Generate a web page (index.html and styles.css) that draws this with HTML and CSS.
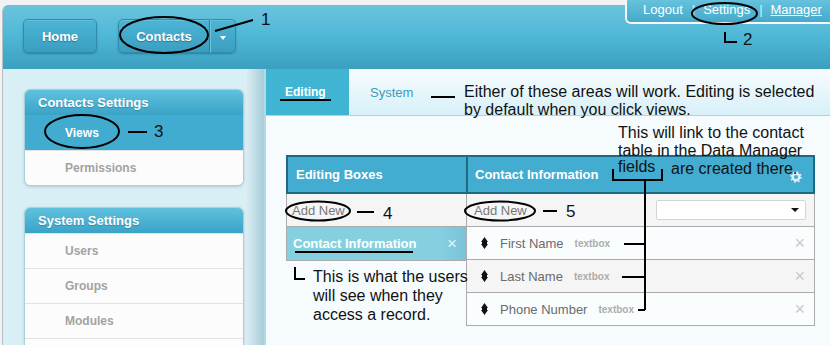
FILE: index.html
```html
<!DOCTYPE html>
<html lang="en">
<head>
    <meta charset="UTF-8">
    <title>Contacts - Views</title>
    <link rel="stylesheet" href="styles.css">
</head>
<body>

    <div class="util">
        <a class="util-link">Logout</a>
        <span class="util-sep">|</span>
        <a class="util-link">Settings</a>
        <span class="util-sep">|</span>
        <a class="util-link current">Manager</a>
    </div>

    <div class="app">
        <header class="topbar">
            <a class="btn btn-home">Home</a>
            <div class="btn-group">
                <a class="btn btn-main">Contacts</a>
                <span class="btn btn-caret"></span>
            </div>
        </header>

        <div class="layout">
            <aside class="sidebar">
                <div class="menu-box">
                    <div class="menu-title">Contacts Settings</div>
                    <a class="menu-item active">Views</a>
                    <a class="menu-item">Permissions</a>
                </div>
                <div class="menu-box">
                    <div class="menu-title">System Settings</div>
                    <a class="menu-item">Users</a>
                    <a class="menu-item">Groups</a>
                    <a class="menu-item">Modules</a>
                    <a class="menu-item"></a>
                </div>
            </aside>

            <main class="content">
                <nav class="tabs">
                    <a class="tab active">Editing</a>
                    <a class="tab">System</a>
                </nav>

                <div class="panel">
                    <div class="boxes">
                        <div class="cell-head">Editing Boxes</div>
                        <div class="row row-add"><a class="add-new">Add New</a></div>
                        <div class="row row-box">
                            <span>Contact Information</span>
                            <span class="remove">&times;</span>
                        </div>
                    </div>

                    <div class="fields">
                        <div class="cell-head">
                            Contact Information
                            <!-- gear -->
                            <svg class="gear" width="12" height="12" viewBox="0 0 12 12">
                                <circle cx="6" cy="6" r="3.3" fill="none" stroke="#dcf0f6" stroke-width="2.4"/>
                                <circle cx="6" cy="6" r="4.9" fill="none" stroke="#dcf0f6" stroke-width="1.8" stroke-dasharray="1.7 2.15"/>
                            </svg>
                        </div>
                        <div class="row row-add">
                            <a class="add-new">Add New</a>
                            <div class="field-select"><span class="select-caret"></span></div>
                        </div>
                        <div class="row row-field">
                            <svg class="drag" width="7" height="12" viewBox="0 0 7 12"><path d="M0 5L3.5 0L7 5ZM0 7L3.5 12L7 7Z" fill="#111"/><rect x="1" y="5" width="5" height="2" fill="#111"/></svg>
                            <span class="field-name">First Name</span>
                            <span class="field-type">textbox</span>
                            <span class="remove">&times;</span>
                        </div>
                        <div class="row row-field alt">
                            <svg class="drag" width="7" height="12" viewBox="0 0 7 12"><path d="M0 5L3.5 0L7 5ZM0 7L3.5 12L7 7Z" fill="#111"/><rect x="1" y="5" width="5" height="2" fill="#111"/></svg>
                            <span class="field-name">Last Name</span>
                            <span class="field-type">textbox</span>
                            <span class="remove">&times;</span>
                        </div>
                        <div class="row row-field">
                            <svg class="drag" width="7" height="12" viewBox="0 0 7 12"><path d="M0 5L3.5 0L7 5ZM0 7L3.5 12L7 7Z" fill="#111"/><rect x="1" y="5" width="5" height="2" fill="#111"/></svg>
                            <span class="field-name">Phone Number</span>
                            <span class="field-type">textbox</span>
                            <span class="remove">&times;</span>
                        </div>
                    </div>
                </div>
            </main>
        </div>
    </div>

    <!-- hand drawn notes on top of the screenshot -->
    <div class="notes">
        <svg class="marks" width="830" height="345" viewBox="0 0 830 345">
            <g fill="none" stroke="#000" stroke-width="2">
                <ellipse cx="164" cy="35" rx="44" ry="18"/>
                <path d="M215 31L253 20"/>
                <ellipse cx="724.5" cy="13.5" rx="32.5" ry="10.5"/>
                <path d="M725 32V42H737"/>
                <ellipse cx="82" cy="131.5" rx="37" ry="16.5"/>
                <path d="M128 132H147"/>
                <path d="M431 97H455"/>
                <path d="M280 100H331"/>
                <ellipse cx="318" cy="211" rx="32" ry="9.5"/>
                <path d="M357 212H374"/>
                <ellipse cx="500" cy="211" rx="35" ry="9.5"/>
                <path d="M543 211H557"/>
                <path d="M295 252H413"/>
                <path d="M613 169V180H662V169"/>
                <path d="M645 180V310"/>
                <path d="M624 244H645M622 277H645M638 310H645"/>
                <path d="M295 267V279H305"/>
            </g>
        </svg>
        <div class="note num n1">1</div>
        <div class="note num n2">2</div>
        <div class="note num n3">3</div>
        <div class="note num n4">4</div>
        <div class="note num n5">5</div>
        <div class="note note-tab">Either of these areas will work. Editing is selected<br>by default when you click views.</div>
        <div class="note note-link">This will link to the contact<br>table in the Data Manager</div>
        <div class="note note-fields">fields</div>
        <div class="note note-there">are created there.</div>
        <div class="note note-record">This is what the users<br>will see when they<br>access a record.</div>
    </div>

</body>
</html>
```

FILE: styles.css
```css
/* page shell */
body {
    margin: 0;
    height: 345px;
    overflow: hidden;
    position: relative;
    background: #f2f2f2;
    font-family: 'Liberation Sans', Arial, sans-serif;
}

a {
    cursor: pointer;
}

.app {
    margin: 5px 0 0 2px;
    border-left: 1px solid #b9bfc2;
    border-top-left-radius: 6px;
    overflow: hidden;
    height: 340px;
}

/* top bar */
.topbar {
    height: 64px;
    box-sizing: border-box;
    padding: 14px 0 0 20px;
    display: flex;
    align-items: flex-start;
    gap: 21px;
    background: linear-gradient(#6cc3dc, #50b9d8 45%, #3b9fc0);
}

.btn {
    height: 34px;
    box-sizing: border-box;
    display: flex;
    align-items: center;
    justify-content: center;
    border: 1px solid #2f8cac;
    border-radius: 5px;
    background: linear-gradient(#4cb5d6, #3a9ec0);
    box-shadow: 0 1px 2px rgba(0, 0, 0, 0.25), inset 0 1px 0 rgba(255, 255, 255, 0.15);
    color: white;
    font-size: 13px;
    font-weight: bold;
    text-shadow: 0 1px 1px rgba(0, 0, 0, 0.3);
}

.btn-home {
    width: 74px;
}

.btn-group {
    display: flex;
}

.btn-main {
    width: 92px;
    border-radius: 5px 0 0 5px;
}

.btn-caret {
    width: 26px;
    border-left-color: #6fc4dd;
    border-radius: 0 5px 5px 0;
}

.btn-caret::after {
    content: '';
    margin-top: 4px;
    border-left: 3px solid transparent;
    border-right: 3px solid transparent;
    border-top: 4px solid white;
}

/* logout / settings / manager */
.util {
    position: absolute;
    top: 0;
    right: 0;
    width: 187px;
    height: 18px;
    padding: 0 0 4px 16px;
    display: flex;
    align-items: center;
    border-left: 2px solid #f6f6f6;
    border-bottom: 2px solid #f6f6f6;
    border-bottom-left-radius: 6px;
    background: linear-gradient(#66c2dd, #46a9ca);
    color: white;
    font-size: 13px;
    z-index: 2;
}

.util-sep {
    margin: 0 8px 0 9px;
    color: #d6eef6;
}

.util-link.current {
    text-decoration: underline;
}

/* body below the top bar */
.layout {
    display: flex;
    height: 276px;
}

.sidebar {
    width: 262px;
    flex-shrink: 0;
    box-sizing: border-box;
    padding: 20px 0 0 21px;
    background: linear-gradient(90deg, #d8eff6 0, #d8eff6 241px, #deeff5 242px, #a7cdd9 261px, #c5e3ec 262px);
}

.menu-box {
    width: 220px;
    box-sizing: border-box;
    margin-bottom: 21px;
    border: 1px solid #a6d0dc;
    border-radius: 6px;
    overflow: hidden;
    background: #fcfcfc;
    box-shadow: 0 1px 3px rgba(0, 0, 0, 0.15);
}

.menu-title {
    height: 25px;
    line-height: 25px;
    padding-left: 13px;
    background: linear-gradient(#5fc1de, #3aa3c6);
    color: white;
    font-size: 13px;
    font-weight: bold;
    text-shadow: 0 1px 1px rgba(0, 0, 0, 0.2);
}

.menu-item {
    display: block;
    height: 34px;
    line-height: 34px;
    padding-left: 40px;
    border-top: 1px solid #e2e2e2;
    color: #a2a2a2;
    font-size: 12px;
    font-weight: bold;
    text-shadow: 0 1px 0 #fff;
}

.menu-item.active {
    background: #42abd0;
    border-top-color: #42abd0;
    color: white;
    text-shadow: none;
}

/* main area */
.content {
    flex: 1;
    border-left: 1px solid #b4dae5;
    background: #f6fcfe;
}

.tabs {
    height: 47px;
    box-sizing: border-box;
    display: flex;
    border-bottom: 1px solid #a5d8e7;
    background: linear-gradient(#f7fcfe, #d7f0f8);
}

.tab {
    display: flex;
    align-items: center;
    padding-left: 21px;
    color: #3b9cc1;
    font-size: 13px;
}

.tab.active {
    width: 83px;
    box-sizing: border-box;
    padding-left: 19px;
    background: #3fb5d3;
    color: white;
    font-size: 12px;
    font-weight: bold;
}

.panel {
    display: flex;
    padding: 39px 0 0 20px;
}

.boxes {
    flex: none;
    width: 180px;
}

.fields {
    flex: none;
    width: 349px;
}

.cell-head {
    height: 39px;
    box-sizing: border-box;
    display: flex;
    align-items: center;
    border: 2px solid #1f6881;
    border-right: 0;
    padding-left: 8px;
    background: #43acd1;
    color: white;
    font-size: 13px;
    font-weight: bold;
}

.fields .cell-head {
    border-right: 2px solid #1f6881;
    padding-left: 7px;
    position: relative;
}

.gear {
    position: absolute;
    right: 11px;
    top: 14px;
}

.row {
    height: 33px;
    box-sizing: border-box;
    display: flex;
    align-items: center;
    border: 1px solid #ababab;
    border-top: 0;
}

.boxes .row {
    border-right: 0;
}

.row-add {
    background: #f5f5f5;
}

.add-new {
    color: #777;
    font-size: 13px;
    padding-left: 5px;
}

.fields .add-new {
    padding-left: 7px;
}

.field-select {
    margin-left: auto;
    margin-right: 8px;
    width: 150px;
    height: 20px;
    box-sizing: border-box;
    display: flex;
    align-items: center;
    justify-content: flex-end;
    border: 1px solid #d4d4d4;
    border-radius: 2px;
    background: white;
}

.select-caret {
    margin-right: 6px;
    border-left: 4px solid transparent;
    border-right: 4px solid transparent;
    border-top: 4px solid #111;
}

.row-box {
    height: 34px;
    justify-content: space-between;
    padding: 0 9px 0 6px;
    background: linear-gradient(90deg, #84d0e1 85%, #78c3d6);
    color: white;
    font-size: 13px;
    font-weight: bold;
}

.row-box .remove {
    color: #e4f4f8;
    font-weight: normal;
    font-size: 17px;
}

.row-field {
    padding-left: 14px;
    background: #fafdfe;
}

.row-field.alt {
    background: #f5f5f5;
}

.field-name {
    margin-left: 12px;
    color: #6a6a6a;
    font-size: 13px;
}

.field-type {
    margin-left: 11px;
    color: #acacac;
    font-size: 10px;
    font-weight: bold;
}

.row-field .remove {
    margin-left: auto;
    margin-right: 9px;
    color: #c9c9c9;
    font-size: 18px;
}

/* annotations */
.notes {
    position: absolute;
    top: 0;
    left: 0;
    width: 830px;
    height: 345px;
    pointer-events: none;
    z-index: 3;
}

.marks {
    position: absolute;
    top: 0;
    left: 0;
}

.note {
    position: absolute;
    color: #111;
    font-size: 16px;
    line-height: 18px;
    white-space: nowrap;
}

.num {
    font-size: 17px;
    line-height: 17px;
}

.n1 { left: 261px; top: 11px; }
.n2 { left: 743px; top: 31px; }
.n3 { left: 154px; top: 123px; }
.n4 { left: 383px; top: 205px; }
.n5 { left: 566px; top: 203px; }

.note-tab { left: 464px; top: 83px; }
.note-link { left: 618px; top: 124px; }
.note-fields { left: 618px; top: 158px; }
.note-there { left: 671px; top: 160px; }

.note-record {
    left: 313px;
    top: 267px;
    line-height: 19px;
}
```
